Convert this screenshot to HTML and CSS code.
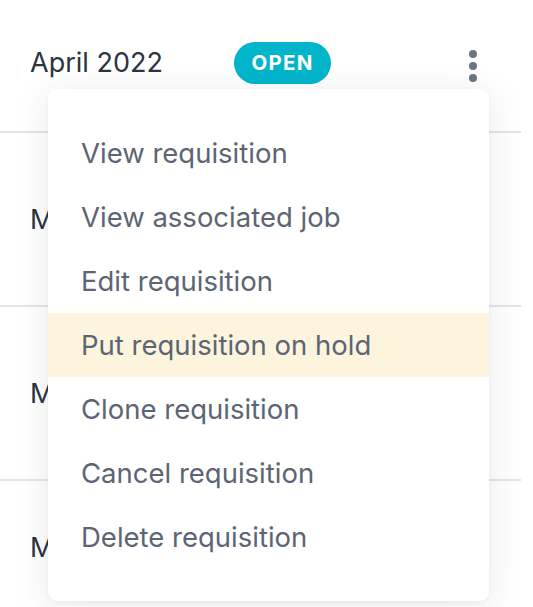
FILE: index.html
```html
<!DOCTYPE html>
<html lang="en">
<head>
<meta charset="utf-8">
<title>Requisitions</title>
<link rel="stylesheet" href="styles.css">
</head>
<body>
<div class="table">
  <div class="row row-first">
    <div class="cell-date">April 2022</div>
    <div class="cell-status"><span class="badge">OPEN</span></div>
    <div class="cell-actions">
      <button class="kebab" aria-label="Actions">
        <svg width="10" height="34" viewBox="0 0 10 34"><circle cx="5" cy="5" r="4" fill="#6b7685"/><circle cx="5" cy="17" r="4" fill="#6b7685"/><circle cx="5" cy="29" r="4" fill="#6b7685"/></svg>
      </button>
      <ul class="menu">
        <li class="menu-item">View requisition</li>
        <li class="menu-item">View associated job</li>
        <li class="menu-item">Edit requisition</li>
        <li class="menu-item is-active">Put requisition on hold</li>
        <li class="menu-item">Clone requisition</li>
        <li class="menu-item">Cancel requisition</li>
        <li class="menu-item">Delete requisition</li>
      </ul>
    </div>
  </div>
  <div class="row row-tall"><div class="cell-date">May 2022</div></div>
  <div class="row row-tall"><div class="cell-date">May 2022</div></div>
  <div class="row row-last"><div class="cell-date">May 2022</div></div>
</div>
</body>
</html>
```
FILE: styles.css
```css
html, body {
  margin: 0;
  padding: 0;
  background: #ffffff;
  font-family: Inter, "Liberation Sans", sans-serif;
  overflow: hidden;
}

.table {
  width: 521px;
}

.row {
  display: flex;
  align-items: center;
  padding-left: 30px;
  padding-right: 16px;
  border-bottom: 2px solid #e2e6eb;
  box-sizing: border-box;
}

.row-first {
  height: 133px;
  padding-bottom: 6px;
  position: relative;
}

.row-tall {
  height: 174px;
}

.row-last {
  height: 140px;
  border-bottom: none;
  padding-bottom: 8px;
}

.cell-date {
  width: 204px;
  font-size: 27px;
  color: #2c3440;
  white-space: nowrap;
}

.cell-status {
  flex: 1;
  display: flex;
}

.badge {
  display: inline-flex;
  align-items: center;
  justify-content: center;
  width: 97px;
  height: 42px;
  border-radius: 21px;
  background: #02b5cb;
  color: #ffffff;
  font-weight: 700;
  font-size: 20.5px;
  letter-spacing: 1.2px;
}

.cell-actions {
  width: 64px;
  display: flex;
  justify-content: center;
}

.kebab {
  border: none;
  background: none;
  padding: 0;
  margin: 6px 0 0 0;
  display: flex;
}

.menu {
  position: absolute;
  left: 48px;
  top: 89px;
  width: 441px;
  margin: 0;
  padding: 32px 0;
  list-style: none;
  background: #ffffff;
  border-radius: 9px;
  box-shadow: 0 6px 36px rgba(40, 50, 70, 0.10), 0 1px 4px rgba(40, 50, 70, 0.05);
  box-sizing: border-box;
  z-index: 10;
}

.menu-item {
  height: 64px;
  display: flex;
  align-items: center;
  padding-left: 33px;
  font-size: 27.5px;
  color: #5b6573;
  white-space: nowrap;
}

.menu-item.is-active {
  background: #fdf4de;
}
```
